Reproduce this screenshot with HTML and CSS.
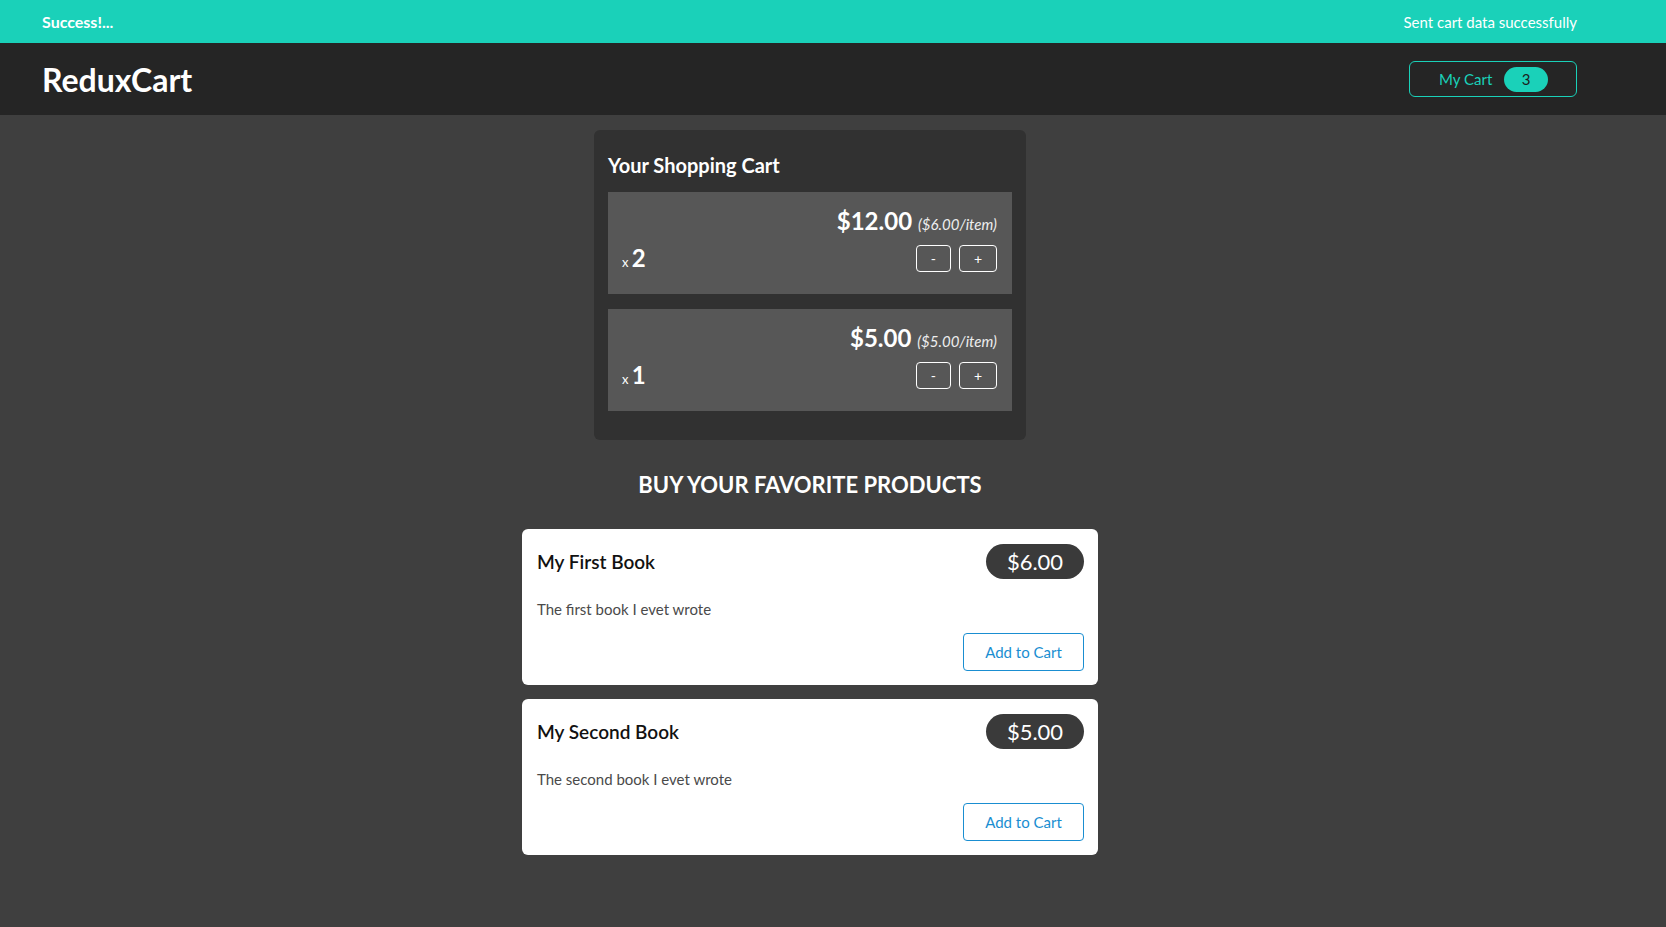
FILE: index.html
```html
<!DOCTYPE html>
<html lang="en">
<head>
<meta charset="utf-8">
<title>ReduxCart</title>
<link rel="stylesheet" href="styles.css">
</head>
<body>
<section class="notification">
  <h2 class="notification-title">Success!...</h2>
  <p class="notification-message">Sent cart data successfully</p>
</section>
<header class="header">
  <h1 class="logo">ReduxCart</h1>
  <button class="cart-button"><span>My Cart</span><span class="badge">3</span></button>
</header>
<main class="main">
  <section class="cart">
    <h2 class="cart-title">Your Shopping Cart</h2>
    <ul class="cart-list">
      <li class="item">
        <div class="item-header">
          <h3 class="item-name"></h3>
          <div class="item-price">$12.00 <span class="item-unit">($6.00/item)</span></div>
        </div>
        <div class="item-details">
          <div class="quantity">x <span class="qty-num">2</span></div>
          <div class="actions">
            <button class="qty-btn">-</button>
            <button class="qty-btn">+</button>
          </div>
        </div>
      </li>
      <li class="item">
        <div class="item-header">
          <h3 class="item-name"></h3>
          <div class="item-price">$5.00 <span class="item-unit">($5.00/item)</span></div>
        </div>
        <div class="item-details">
          <div class="quantity">x <span class="qty-num">1</span></div>
          <div class="actions">
            <button class="qty-btn">-</button>
            <button class="qty-btn">+</button>
          </div>
        </div>
      </li>
    </ul>
  </section>
  <section class="products">
    <h2 class="products-title">Buy your favorite products</h2>
    <ul class="product-list">
      <li class="product">
        <header class="product-header">
          <h3 class="product-name">My First Book</h3>
          <div class="price">$6.00</div>
        </header>
        <p class="product-desc">The first book I evet wrote</p>
        <div class="product-actions"><button class="add-btn">Add to Cart</button></div>
      </li>
      <li class="product">
        <header class="product-header">
          <h3 class="product-name">My Second Book</h3>
          <div class="price">$5.00</div>
        </header>
        <p class="product-desc">The second book I evet wrote</p>
        <div class="product-actions"><button class="add-btn">Add to Cart</button></div>
      </li>
    </ul>
  </section>
</main>
</body>
</html>
```
FILE: styles.css
```css
* { box-sizing: border-box; }
html, body { margin: 0; padding: 0; }
body {
  font-family: Lato, "Liberation Sans", sans-serif;
  background: #3f3f3f;
  min-height: 100vh;
  color: #fff;
}
button { font-family: inherit; cursor: pointer; }

.notification {
  height: 43px;
  background: #1ad1b9;
  display: flex;
  justify-content: space-between;
  align-items: center;
  padding: 0 89px 0 42px;
  color: #fff;
}
.notification-title { margin: 0; font-size: 16px; font-weight: 700; }
.notification-message { margin: 0; font-size: 15px; }

.header {
  height: 72px;
  background: #252525;
  display: flex;
  justify-content: space-between;
  align-items: center;
  padding: 0 89px 0 42px;
}
.logo { margin: 0; font-size: 32px; font-weight: 700; color: #fff; }
.cart-button {
  width: 168px;
  height: 36px;
  border: 1px solid #1ad1b9;
  border-radius: 6px;
  background: transparent;
  color: #1ad1b9;
  font-size: 15px;
  display: flex;
  align-items: center;
  justify-content: space-between;
  padding: 0 28px 0 29px;
}
.badge {
  width: 44px;
  height: 25px;
  border-radius: 13px;
  background: #1ad1b9;
  color: #1d1d1d;
  display: flex;
  align-items: center;
  justify-content: center;
  font-size: 15px;
}

.main {
  display: flex;
  flex-direction: column;
  align-items: center;
  padding: 15px 46px 40px 0;
}

.cart {
  width: 432px;
  background: #313131;
  border-radius: 6px;
  padding: 14px 14px 29px;
}
.cart-title {
  margin: 9px 0 15px;
  font-size: 20px;
  line-height: 24px;
  font-weight: 700;
}
.cart-list { list-style: none; margin: 0; padding: 0; display: flex; flex-direction: column; gap: 15px; }
.item {
  background: #575757;
  padding: 15px 15px 22px 14px;
}
.item-header { display: flex; justify-content: space-between; align-items: center; height: 28px; }
.item-name { margin: 0; }
.item-price { font-size: 24px; line-height: 28px; font-weight: 700; }
.item-unit { font-size: 15px; line-height: 1; font-weight: 400; font-style: italic; color: #eee; }
.item-details { display: flex; justify-content: space-between; align-items: flex-end; margin-top: 10px; height: 27px; }
.quantity { font-size: 13px; line-height: 1; padding-bottom: 2px; }
.qty-num { font-size: 24px; line-height: 1; font-weight: 700; }
.actions { display: flex; gap: 8px; }
.qty-btn {
  height: 27px;
  padding: 0 14px;
  border: 1px solid #fff;
  border-radius: 4px;
  background: transparent;
  color: #fff;
  font-size: 14px;
}

.products { width: 576px; }
.products-title {
  margin: 30px 0;
  text-align: center;
  text-transform: uppercase;
  font-size: 22px;
  line-height: 29px;
  font-weight: 700;
}
.product-list { list-style: none; margin: 0; padding: 0; display: flex; flex-direction: column; gap: 14px; }
.product {
  background: #fff;
  border-radius: 6px;
  padding: 15px 14px 14px 15px;
  color: #1d1d1d;
}
.product-header { display: flex; justify-content: space-between; align-items: center; }
.product-name { margin: 0; font-size: 19px; font-weight: 600; color: #111; }
.price {
  width: 98px;
  height: 35px;
  border-radius: 18px;
  background: #3a3a3a;
  color: #fff;
  font-size: 22px;
  display: flex;
  align-items: center;
  justify-content: center;
}
.product-desc { margin: 20px 0 0; font-size: 15px; line-height: 20px; color: #4a4a4a; }
.product-actions { display: flex; justify-content: flex-end; margin-top: 14px; }
.add-btn {
  width: 121px;
  height: 38px;
  border: 1px solid #1a8ed1;
  border-radius: 4px;
  background: #fff;
  color: #1a8ed1;
  font-size: 15px;
}
```
